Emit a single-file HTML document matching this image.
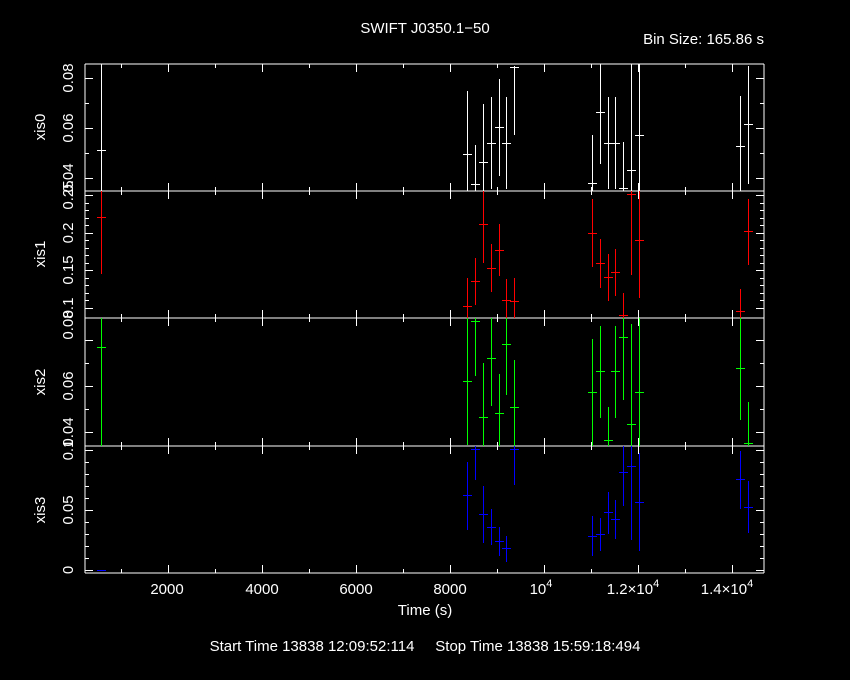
<!DOCTYPE html>
<html><head><meta charset="utf-8"><style>
html,body{margin:0;padding:0;background:#000;}
svg{display:block;}
text{font-family:"Liberation Sans",sans-serif;fill:#fff;font-size:15px;}
</style></head><body>
<svg id="s" width="850" height="680" viewBox="0 0 850 680" xmlns="http://www.w3.org/2000/svg">
<rect width="850" height="680" fill="#000"/>
<text x="425" y="33" text-anchor="middle">SWIFT J0350.1−50</text>
<text x="764" y="44" text-anchor="end">Bin Size: 165.86 s</text>
<g font-size="14">
<text transform="translate(45,127) rotate(-90)" text-anchor="middle">xis0</text>
<text transform="translate(45,254) rotate(-90)" text-anchor="middle">xis1</text>
<text transform="translate(45,382) rotate(-90)" text-anchor="middle">xis2</text>
<text transform="translate(45,510) rotate(-90)" text-anchor="middle">xis3</text>
<text transform="translate(73,78) rotate(-90)" text-anchor="middle">0.08</text>
<text transform="translate(73,128) rotate(-90)" text-anchor="middle">0.06</text>
<text transform="translate(73,178) rotate(-90)" text-anchor="middle">0.04</text>
<text transform="translate(73,195) rotate(-90)" text-anchor="middle">0.25</text>
<text transform="translate(73,233) rotate(-90)" text-anchor="middle">0.2</text>
<text transform="translate(73,270) rotate(-90)" text-anchor="middle">0.15</text>
<text transform="translate(73,308) rotate(-90)" text-anchor="middle">0.1</text>
<text transform="translate(73,325) rotate(-90)" text-anchor="middle">0.08</text>
<text transform="translate(73,386) rotate(-90)" text-anchor="middle">0.06</text>
<text transform="translate(73,432) rotate(-90)" text-anchor="middle">0.04</text>
<text transform="translate(73,450) rotate(-90)" text-anchor="middle">0.1</text>
<text transform="translate(73,510) rotate(-90)" text-anchor="middle">0.05</text>
<text transform="translate(73,570) rotate(-90)" text-anchor="middle">0</text>
</g>
<text x="167" y="594" text-anchor="middle">2000</text>
<text x="262" y="594" text-anchor="middle">4000</text>
<text x="356" y="594" text-anchor="middle">6000</text>
<text x="450" y="594" text-anchor="middle">8000</text>
<text x="541" y="594" text-anchor="middle">10<tspan dy="-7" font-size="11">4</tspan></text>
<text x="633" y="594" text-anchor="middle">1.2×10<tspan dy="-7" font-size="11">4</tspan></text>
<text x="727" y="594" text-anchor="middle">1.4×10<tspan dy="-7" font-size="11">4</tspan></text>
<text x="425" y="615" text-anchor="middle">Time (s)</text>
<text x="425" y="651" text-anchor="middle" xml:space="preserve">Start Time 13838 12:09:52:114     Stop Time 13838 15:59:18:494</text>
<g id="g" stroke-width="1" shape-rendering="crispEdges" fill="none"></g>
</svg>
<script>
var g=document.getElementById('g'),L=85,R=764,P=[64,191,318,446,573];
function ln(x1,y1,x2,y2,c){var e=document.createElementNS('http://www.w3.org/2000/svg','line');e.setAttribute('x1',x1);e.setAttribute('y1',y1);e.setAttribute('x2',x2);e.setAttribute('y2',y2);e.setAttribute('stroke',c||'#fff');g.appendChild(e);}
// frame
ln(L,64,R,64);ln(L,573,R,573);ln(L,64,L,573);ln(R,64,R,573);
for(var i=1;i<4;i++)ln(L,P[i],R,P[i]);
// x ticks
for(var t=1000;t<=14000;t+=1000){var x=Math.round(73.7+t*0.047)+0.5,len=(t%2000==0)?8:4;
 for(var i=0;i<4;i++){ln(x,P[i],x,P[i]+len);ln(x,P[i+1],x,P[i+1]-len);}}
// y ticks
function yt(list){list.forEach(function(a){var y=Math.round(a[0])+0.5,len=a[1]?8:4;ln(L,y,L+len,y);ln(R,y,R-len,y);});}
yt([[78.3,1],[103.3,0],[128.3,1],[153.3,0],[178.3,1]]);
var a=[];for(var k=0;k<16;k++){var y=195+k*7.5;if(y>191&&y<318)a.push([y,(k%5==0)]);}yt(a);
yt([[340,1],[363,0],[386.3,1],[409.3,0],[432,1]]);
a=[];for(var k=0;k<=10;k++){a.push([570.3-k*12,(k%5==0)]);}yt(a);
// data
var xs=[467,475,483,491,499,506,514,592,600,608,615,623,631,639,740,748];
var D=[['#fff',[[154,91,191],[184,145,191],[162,104,191],[143,97,189],[127,79,176],[143,97,189],[67,66,135],[183,135,191],[112,64,164],[143,97,189],[143,97,189],[188,142,191],[170,64,191],[135,64,191],[146,96,191],[124,66,184]],[150,64,191]],
['#f00',[[306,278,318],[281,258,305],[224,191,263],[268,244,292],[250,224,276],[300,279,318],[301,278,318],[233,199,267],[263,239,288],[277,254,301],[272,249,296],[315,293,318],[194,191,275],[240,191,298],[311,289,318],[231,199,265]],[217,191,274]],
['#0f0',[[381,318,445],[321,318,376],[417,363,446],[358,318,406],[413,374,446],[344,318,395],[407,360,446],[392,339,446],[371,326,418],[440,407,446],[371,326,418],[337,318,400],[424,324,446],[392,318,446],[368,318,420],[443,402,446]],[347,318,446]],
['#00f',[[495,462,530],[449,446,480],[514,486,543],[527,509,545],[541,527,556],[548,536,562],[449,446,485],[536,516,556],[534,518,551],[512,492,534],[519,500,539],[472,446,506],[466,446,540],[502,453,551],[479,451,509],[507,481,533]],[570,570,570]]];
D.forEach(function(d){var c=d[0];
 function pt(x,v){x+=0.5;var cy=Math.round(v[0])+0.5;if(v[2]>v[1])ln(x,v[1],x,v[2],c);ln(x-4.5,cy,x+4.5,cy,c);}
 d[1].forEach(function(v,i){pt(xs[i],v);});pt(101,d[2]);});
</script>
</body></html>
